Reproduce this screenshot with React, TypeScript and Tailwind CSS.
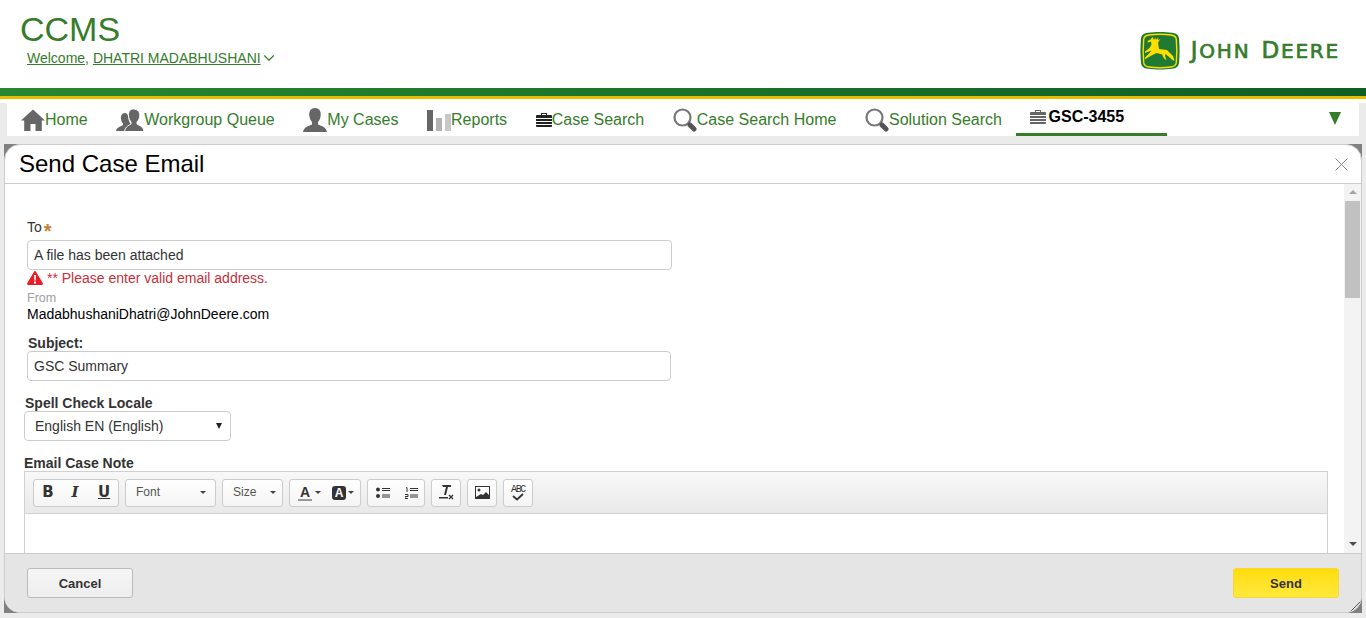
import React from 'react';
import { ChevronDown } from 'lucide-react';

const HomeIcon = () => (
  <svg width="24" height="24" viewBox="0 0 24 24" className="shrink-0">
    <path fill="#666" d="M12 1.500 0 12.500h3.200V23h6.300v-7h5v7h6.300V12.500H24Z" />
  </svg>
);

const GroupIcon = () => (
  <svg width="28" height="24" viewBox="0 0 28 24" className="shrink-0">
    <path fill="#666" d="M9 5c-3 0-4.500 2.500-4 6 .3 2 1.200 3.500 2 4.500v1.500c-2 1.500-6 2-7 6h10c.5-3 3-4 5-5v-2c-2-2-3-5-2.500-8C11.500 7 11 5 9 5Z" />
    <path fill="#666" stroke="#fff" strokeWidth="1" d="M17.500 1c-3.500 0-5.500 2.500-5 7 .3 2.500 1.200 4.500 2.500 6v2c-2 1.500-5.500 2-6.500 7.500H28c-.5-5-4.500-6-7-7.500v-2c1.500-1.500 2.500-3.500 2.800-6 .4-4.500-2.800-7-6.300-7Z" />
  </svg>
);

const UserIcon = () => (
  <svg width="24" height="24" viewBox="0 0 24 24" className="shrink-0">
    <path fill="#666" d="M12 0C8 0 5.800 3 6.300 7.500c.3 2.700 1.300 5 2.700 6.500v2.500C6.500 18 1 18.500 0 24h24c-1-5.500-6.500-6-9-7.500V14c1.400-1.500 2.400-3.800 2.700-6.500C18.200 3 16 0 12 0Z" />
  </svg>
);

const BarsIcon = () => (
  <div className="flex h-[22px] w-[24px] shrink-0 items-end gap-[3px]">
    <div className="h-[21px] w-[6px] bg-[#666]" />
    <div className="h-[13px] w-[6px] bg-[#b3b3b3]" />
    <div className="h-[17px] w-[6px] bg-[#c8c8c8]" />
  </div>
);

const CaseIcon = ({ color }: { color: string }) => (
  <svg width="16" height="14" viewBox="0 0 16 14" className="shrink-0">
    <path fill={color} d="M5 0h6v2h4a1 1 0 0 1 1 1v10a1 1 0 0 1-1 1H1a1 1 0 0 1-1-1V3a1 1 0 0 1 1-1h4Zm1 1v1h4V1Z" />
    <path stroke="#fff" strokeWidth="1" d="M0 5.500h16M0 8.500h16M0 11.500h16" />
  </svg>
);

const SearchIcon = () => (
  <svg width="24" height="24" viewBox="0 0 24 24" className="shrink-0">
    <circle cx="9.500" cy="9.500" r="8" fill="none" stroke="#777" strokeWidth="2.200" />
    <path stroke="#555" strokeWidth="5" strokeLinecap="round" d="M17 17l4 4" />
  </svg>
);

const Logo = () => (
  <svg width="40" height="38" viewBox="0 0 40 38" className="shrink-0">
    <path fill="#1f7a34" d="M8 .8C15 -.2 25 -.2 32 .8c4.500.6 6.500 2 7 6 .8 8 .8 16 0 24-.5 4-2.500 5.500-7 6-7 1-17 1-24 0-4.500-.5-6.500-2-7-6-.8-8-.8-16 0-24 .5-4 2.500-5.400 7-6Z" />
    <path fill="none" stroke="#ffde00" strokeWidth="1.400" d="M9 3c6.500-.8 15.500-.8 22 0 3.500.4 5 1.500 5.300 4.500.7 7.500.7 15.500 0 23-.3 3-1.800 4-5.300 4.500-6.500.8-15.500.8-22 0-3.500-.5-5-1.500-5.300-4.500-.7-7.500-.7-15.500 0-23C4 4.500 5.500 3.400 9 3Z" />
    <path fill="#ffde00" d="M12.500 5l1.500 3 1-2.500 1 2.500 1.500-2.500.5 2.500 2-1-1.500 3-.5 1 1 6 8 1 2 2 4 4 1.500 4.500h-1.500l-4.500-4-3-2.500-.5 2 1.500 3.500h-1.500l-2.500-3.500v-1.500l-6-1.500-6 3-5 3-1-1 5-5 2-2.500-4 1.500-2.500 1v-1.500l4.500-3.500 2-3.500-.5-3-3 1-.5-1.500 3-1.500Z" />
  </svg>
);

const navItems = [
  { icon: <HomeIcon />, label: 'Home' },
  { icon: <GroupIcon />, label: 'Workgroup Queue' },
  { icon: <UserIcon />, label: 'My Cases' },
  { icon: <BarsIcon />, label: 'Reports' },
  { icon: <CaseIcon color="#222" />, label: 'Case Search' },
  { icon: <SearchIcon />, label: 'Case Search Home' },
  { icon: <SearchIcon />, label: 'Solution Search' },
];

const Caret = () => (
  <div className="h-0 w-0 border-x-[3px] border-t-[3px] border-x-transparent border-t-[#444]" />
);

const ToolGroup = ({ className, children }: { className: string; children: React.ReactNode }) => (
  <div className={`flex h-[28px] items-center rounded-[3px] border border-[#ccc] bg-gradient-to-b from-white to-[#f4f4f4] ${className}`}>
    {children}
  </div>
);

const inputClass =
  'flex h-[30px] items-center rounded-[4px] border border-[#ccc] bg-white px-[6px] text-[14px] text-[#333]';

export default function App() {
  return (
    <div className="flex h-[618px] flex-col overflow-hidden bg-white font-['Liberation_Sans',Arial,sans-serif]">
      <header className="flex h-[88px] shrink-0 justify-between">
        <div className="pl-[20px] pt-[9px]">
          <div className="text-[34px] leading-[40px] text-[#367c2b]">CCMS</div>
          <div className="ml-[7px] flex items-center text-[14px] leading-[16px] text-[#367c2b]">
            <span className="underline">Welcome,</span>
            <span>&nbsp;</span>
            <span className="underline">DHATRI MADABHUSHANI</span>
            <ChevronDown size={18} strokeWidth={1.5} className="-ml-[1px]" />
          </div>
        </div>
        <div className="flex items-start gap-[11px] pr-[26px] pt-[32px]">
          <Logo />
          <div className="mt-[6px] flex h-[24px] items-baseline whitespace-nowrap font-['DejaVu_Sans',sans-serif] leading-[24px] tracking-[1.8px] text-[#367c2b] [-webkit-text-stroke:0.7px_#367c2b]">
            <span className="text-[23px]">J</span>
            <span className="text-[20px]">OHN</span>
            <span className="ml-[11px] text-[23px]">D</span>
            <span className="text-[20px]">EERE</span>
          </div>
        </div>
      </header>

      <div className="h-[8px] shrink-0 bg-gradient-to-r from-[#288731] to-[#0f5e24]" />
      <div className="h-[3px] shrink-0 bg-[#e8bd00]" />
      <div className="h-[4px] shrink-0 bg-white" />

      <div className="flex min-h-0 flex-1 flex-col bg-[#ebebeb]">
        <nav className="mx-[7px] flex h-[33px] shrink-0 items-stretch bg-white">
          <div className="flex items-center pl-[14px]">
            {navItems.map((item) => (
              <div key={item.label} className="mr-[28.6px] flex items-center whitespace-nowrap text-[16px] text-[#367c2b]">
                {item.icon}
                <span>{item.label}</span>
              </div>
            ))}
          </div>
          <div className="-ml-[15px] flex w-[151px] items-center gap-[3px] border-b-[3px] border-[#367c2b] pb-[2px] pl-[14px]">
            <CaseIcon color="#666" />
            <span className="text-[16px] font-bold text-black">GSC-3455</span>
          </div>
          <div className="ml-auto flex items-center pb-[2px] pr-[16px]">
            <div className="mr-[2px] h-0 w-0 border-x-[6px] border-t-[13px] border-x-transparent border-t-[#367c2b]" />
          </div>
        </nav>

        <div className="mx-[4px] mb-[5px] mt-[8px] min-h-0 flex-1 bg-[#808080]">
          <div className="relative flex h-full flex-col overflow-hidden rounded-[16px] border border-[#ccc] bg-white">
            <div className="flex h-[39px] shrink-0 items-center justify-between border-b border-[#ccc] pl-[14px] pr-[13px]">
              <h1 className="text-[24px] leading-[38px] text-black">Send Case Email</h1>
              <svg width="13" height="13" viewBox="0 0 13 13">
                <path stroke="#888" strokeWidth="1" d="M.5.500l12 12M12.500.500l-12 12" />
              </svg>
            </div>

            <div className="flex min-h-0 flex-1">
              <div className="min-w-0 flex-1 overflow-hidden pl-[19px] pt-[35px]">
                <div className="ml-[3px] flex h-[16px] items-center text-[14px] text-[#333]">
                  To<span className="ml-[2px] mt-[8px] text-[20px] font-bold leading-[16px] text-[#c77f2e]">*</span>
                </div>
                <div className={`ml-[3px] mt-[5px] w-[645px] ${inputClass}`}>A file has been attached</div>
                <div className="ml-[3px] flex h-[16px] items-center gap-[4px] text-[14px] text-[#c8303a]">
                  <svg width="16" height="14" viewBox="0 0 16 14">
                    <path fill="#ed1c24" d="M8 0c.5 0 .8.300 1 .7l6.800 11.500c.4.800 0 1.800-1 1.800H1.200c-1 0-1.400-1-1-1.800L7 .7C7.200.300 7.500 0 8 0Z" />
                    <path fill="#fff" d="M7 4h2l-.3 5.500H7.300ZM7 10.500h2V12.500H7Z" />
                  </svg>
                  <span>** Please enter valid email address.</span>
                </div>
                <div className="ml-[3px] mt-[5px] text-[12.5px] leading-[14px] text-[#a0a0a0]">From</div>
                <div className="ml-[3px] mt-[1px] text-[14px] leading-[16px] text-black">MadabhushaniDhatri@JohnDeere.com</div>
                <div className="ml-[4px] mt-[13px] text-[14px] font-bold leading-[16px] text-[#333]">Subject:</div>
                <div className={`ml-[3px] w-[644px] ${inputClass}`}>GSC Summary</div>
                <div className="ml-[1px] mt-[14px] text-[14px] font-bold leading-[16px] text-[#333]">Spell Check Locale</div>
                <div className="flex h-[30px] w-[207px] items-center justify-between rounded-[4px] border border-[#ccc] bg-white pl-[10px] pr-[8px] text-[14px] text-[#333]">
                  <span>English EN (English)</span>
                  <div className="h-0 w-0 border-x-[3.5px] border-t-[6px] border-x-transparent border-t-[#222]" />
                </div>
                <div className="mt-[14px] text-[14px] font-bold leading-[16px] text-[#333]">Email Case Note</div>

                <div className="h-[200px] w-[1304px] border border-[#d1d1d1]">
                  <div className="flex h-[42px] items-center gap-[6px] border-b border-[#d1d1d1] bg-gradient-to-b from-[#f8f8f8] to-[#e9e9e9] pl-[8px]">
                    <ToolGroup className="w-[86px] pl-[8px] text-[15px] text-[#333]">
                      <span className="w-[12px] text-center font-['DejaVu_Sans',sans-serif] font-bold">B</span>
                      <span className="ml-[16px] w-[10px] text-center font-['DejaVu_Serif',serif] font-bold italic">I</span>
                      <span className="ml-[18px] w-[12px] text-center font-['DejaVu_Sans',sans-serif] font-bold underline">U</span>
                    </ToolGroup>
                    <ToolGroup className="w-[91px] justify-between pb-[1px] pl-[10px] pr-[9px] text-[12px] text-[#555]">
                      <span>Font</span>
                      <Caret />
                    </ToolGroup>
                    <ToolGroup className="w-[61px] justify-between pb-[1px] pl-[10px] pr-[6px] text-[12px] text-[#555]">
                      <span>Size</span>
                      <Caret />
                    </ToolGroup>
                    <ToolGroup className="w-[72px] pl-[8px]">
                      <div className="w-[14px] border-b-[2px] border-[#999] text-center text-[14px] font-bold leading-[14px] text-[#333]">A</div>
                      <div className="ml-[3px]"><Caret /></div>
                      <div className="ml-[11px] flex h-[14px] w-[14px] items-center justify-center rounded-[3px] bg-[#333] text-[12px] font-bold text-white">A</div>
                      <div className="ml-[2px]"><Caret /></div>
                    </ToolGroup>
                    <ToolGroup className="w-[58px] pl-[8px]">
                      <svg width="14" height="12" viewBox="0 0 14 12">
                        <circle cx="2" cy="2.500" r="2" fill="#333" />
                        <circle cx="2" cy="9" r="2" fill="#333" />
                        <path stroke="#333" d="M6 1.500h8M6 3.500h8M6 8h8M6 10h8" />
                      </svg>
                      <svg width="13" height="12" viewBox="0 0 13 12" className="ml-[15px]">
                        <path stroke="#333" fill="none" d="M5 1.500h8M5 3.500h8M5 8h8M5 10h8M1 1 2 .500V5M0 7.500h3v2H0v2h3" />
                      </svg>
                    </ToolGroup>
                    <ToolGroup className="w-[30px] justify-center">
                      <svg width="16" height="15" viewBox="0 0 16 15">
                        <path fill="#333" d="M4 0h9v2H10L8 10H6l2-8H5ZM1 12h9v1.500H1Z" />
                        <path stroke="#333" strokeWidth="1.300" d="M11 10l4 4M15 10l-4 4" />
                      </svg>
                    </ToolGroup>
                    <ToolGroup className="w-[30px] justify-center">
                      <svg width="15" height="13" viewBox="0 0 15 13">
                        <path fill="#333" d="M0 0h15v13H0Z" />
                        <path fill="#fff" d="M1 1h13v8l-3-3-3 3-2-1-5 3Z" />
                        <circle cx="4" cy="4" r="1.500" fill="#333" />
                      </svg>
                    </ToolGroup>
                    <ToolGroup className="w-[30px] flex-col justify-center">
                      <span className="-mb-[2px] font-['Liberation_Mono',monospace] text-[10px] leading-[10px] tracking-[-1.300px] text-[#333]">ABC</span>
                      <svg width="14" height="8" viewBox="0 0 14 8">
                        <path stroke="#333" strokeWidth="1.800" fill="none" d="M2 3l4 3.500L12 1" />
                      </svg>
                    </ToolGroup>
                  </div>
                </div>
              </div>

              <div className="flex w-[17px] shrink-0 flex-col items-center bg-[#f3f3f3]">
                <div className="mt-[6px] h-0 w-0 border-x-[4px] border-b-[4px] border-x-transparent border-b-[#a3a3a3]" />
                <div className="mt-[7px] h-[97px] w-[15px] bg-[#c1c1c1]" />
                <div className="mt-auto mb-[7px] h-0 w-0 border-x-[4px] border-t-[4px] border-x-transparent border-t-[#505050]" />
              </div>
            </div>

            <div className="flex h-[59px] shrink-0 items-center justify-between border-t border-[#ccc] bg-[#e5e5e5] pl-[22px] pr-[22px]">
              <button className="h-[30px] w-[106px] rounded-[3px] border border-[#bbb] bg-gradient-to-b from-[#f5f5f5] to-[#eee] pt-[1px] text-[13px] font-bold text-[#333]">
                Cancel
              </button>
              <button className="h-[30px] w-[106px] rounded-[3px] border border-[#f5d63d] bg-gradient-to-b from-[#ffdc00] to-[#ffe93b] pt-[1px] text-[13px] font-bold text-[#333]">
                Send
              </button>
            </div>

            <svg width="12" height="12" viewBox="0 0 12 12" className="absolute bottom-0 right-0">
              <path stroke="#555" d="M12 1 1 12M12 5 5 12M12 9 9 12" />
            </svg>
          </div>
        </div>
      </div>
    </div>
  );
}
